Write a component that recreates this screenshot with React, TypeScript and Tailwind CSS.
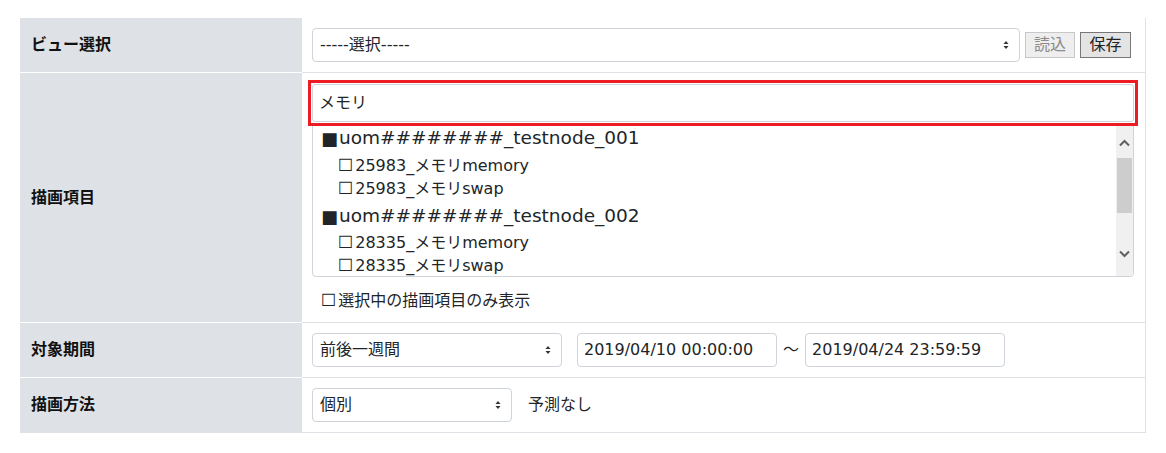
import { ReactNode } from 'react'

const font = "font-['DejaVu_Sans','Noto_Sans_CJK_JP',sans-serif]"

function Arrows() {
  return (
    <svg width="6" height="10" viewBox="0 0 6 10" className="shrink-0">
      <path d="M3 1 L5.5 4 H0.5 Z" fill="#333" />
      <path d="M3 9 L5.5 6 H0.5 Z" fill="#333" />
    </svg>
  )
}

function Select({ value, width }: { value: string; width: string }) {
  return (
    <div className={`${width} h-[34px] shrink-0 rounded-[4px] border border-[#ced4da] bg-white flex items-center justify-between pl-[7px] pr-[10px] text-[16px] text-[#212529]`}>
      <span>{value}</span>
      <Arrows />
    </div>
  )
}

function Row({ label, children, last }: { label: string; children: ReactNode; last?: boolean }) {
  return (
    <div className="flex">
      <div className={`w-[282px] shrink-0 bg-[#dee2e6] flex items-center pl-[11px] text-[16px] font-bold text-[#111] border-b ${last ? 'border-[#dee2e6]' : 'border-white'}`}>
        {label}
      </div>
      <div className="flex-1 border-b border-[#dee2e6] pl-[10px] pr-[11px]">{children}</div>
    </div>
  )
}

const nodes = [
  { name: 'uom########_testnode_001', items: ['25983_メモリmemory', '25983_メモリswap'] },
  { name: 'uom########_testnode_002', items: ['28335_メモリmemory', '28335_メモリswap'] },
]

export default function App() {
  return (
    <div className={`${font} bg-white w-[1166px] h-[453px] pt-[18px] pl-[20px] text-[#212529]`}>
      <div className="w-[1126px] border-r border-[#dee2e6]">
        <Row label="ビュー選択">
          <div className="h-[54px] flex items-center">
            <Select value="-----選択-----" width="w-[708px]" />
            <button className="ml-[5px] w-[50px] h-[26px] border border-[#c8c8c8] bg-[#eeeeee] text-[16px] text-[#8a8a8a] leading-none">
              読込
            </button>
            <button className="ml-[5px] w-[51px] h-[26px] border border-[#777] bg-[#e4e4e4] text-[16px] text-[#222] leading-none">
              保存
            </button>
          </div>
        </Row>
        <Row label="描画項目">
          <div className="h-[249px] pt-[7px]">
            <div className="relative z-10 -mx-[4px] -mb-[2px] border-[3px] border-[#ed1c24] p-[1px]">
              <div className="h-[38px] rounded-[3px] border border-[#ced4da] bg-white flex items-center pl-[6px] text-[16px]">
                メモリ
              </div>
            </div>
            <div className="h-[153px] border border-[#ced4da] rounded-b-[4px] flex overflow-hidden">
              <div className="flex-1 pl-[8px]">
                {nodes.map((n, i) => (
                  <div key={n.name}>
                    <div className={`${i === 0 ? 'h-[29px] pb-[2px]' : 'h-[31px] pt-[2px]'} flex items-center text-[18.5px] leading-none`}>
                      <span className="text-[18px] mr-[1px]">■</span>
                      {n.name}
                    </div>
                    {n.items.map(it => (
                      <div key={it} className="h-[23px] flex items-center pl-[17px] text-[16px] leading-none">
                        <span className="mr-[2px] text-[17px]">☐</span>
                        {it}
                      </div>
                    ))}
                  </div>
                ))}
              </div>
              <div className="w-[17px] bg-[#f0f0f0] flex flex-col items-center">
                <svg width="11" height="8" viewBox="0 0 11 8" className="mt-[14px]">
                  <path d="M1 6.5 L5.5 2 L10 6.5" fill="none" stroke="#606060" strokeWidth="2" />
                </svg>
                <div className="mt-[11px] w-[15px] h-[55px] bg-[#cdcdcd]" />
                <div className="flex-1" />
                <svg width="11" height="8" viewBox="0 0 11 8" className="mb-[18px]">
                  <path d="M1 1.5 L5.5 6 L10 1.5" fill="none" stroke="#606060" strokeWidth="2" />
                </svg>
              </div>
            </div>
            <div className="mt-[11px] pl-[9px] text-[16px] flex items-center">
              <span className="mr-[2px] text-[17px]">☐</span>選択中の描画項目のみ表示
            </div>
          </div>
        </Row>
        <Row label="対象期間">
          <div className="h-[54px] flex items-center">
            <Select value="前後一週間" width="w-[250px]" />
            <div className="ml-[15px] w-[200px] h-[34px] rounded-[4px] border border-[#ced4da] flex items-center pl-[6px] text-[16px]">
              2019/04/10 00:00:00
            </div>
            <span className="mx-[6px] text-[16px]">～</span>
            <div className="w-[200px] h-[34px] rounded-[4px] border border-[#ced4da] flex items-center pl-[6px] text-[16px]">
              2019/04/24 23:59:59
            </div>
          </div>
        </Row>
        <Row label="描画方法" last>
          <div className="h-[54px] flex items-center">
            <Select value="個別" width="w-[200px]" />
            <span className="ml-[16px] text-[16px]">予測なし</span>
          </div>
        </Row>
      </div>
    </div>
  )
}
